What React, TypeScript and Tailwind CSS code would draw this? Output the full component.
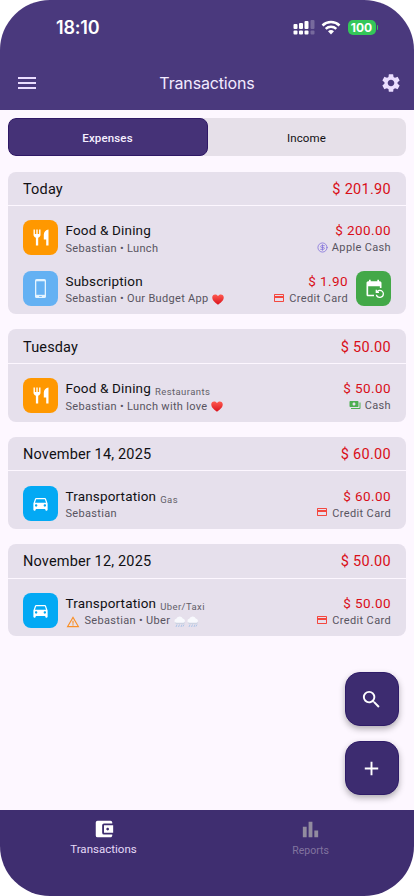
import React, { useState } from "react";
import {
	MdAccountBalanceWallet,
	MdAdd,
	MdBarChart,
	MdCreditCard,
	MdDirectionsCar,
	MdEventRepeat,
	MdMenu,
	MdPayments,
	MdSearch,
	MdSettings,
	MdWarningAmber,
} from "react-icons/md";
import { CircleDollarSign } from "lucide-react";

type Account = "Apple Cash" | "Credit Card" | "Cash";
type Category = "food" | "subscription" | "transport";

interface Transaction {
	category: Category;
	title: string;
	tag?: string;
	person: string;
	note?: string;
	emoji?: "heart" | "clouds";
	amount: string;
	account: Account;
	warning?: boolean;
	recurring?: boolean;
}

interface DayGroup {
	label: string;
	total: string;
	items: Transaction[];
}

const groups: DayGroup[] = [
	{
		label: "Today",
		total: "$ 201.90",
		items: [
			{ category: "food", title: "Food & Dining", person: "Sebastian", note: "Lunch", amount: "$ 200.00", account: "Apple Cash" },
			{ category: "subscription", title: "Subscription", person: "Sebastian", note: "Our Budget App", emoji: "heart", amount: "$ 1.90", account: "Credit Card", recurring: true },
		],
	},
	{
		label: "Tuesday",
		total: "$ 50.00",
		items: [
			{ category: "food", title: "Food & Dining", tag: "Restaurants", person: "Sebastian", note: "Lunch with love", emoji: "heart", amount: "$ 50.00", account: "Cash" },
		],
	},
	{
		label: "November 14, 2025",
		total: "$ 60.00",
		items: [{ category: "transport", title: "Transportation", tag: "Gas", person: "Sebastian", amount: "$ 60.00", account: "Credit Card" }],
	},
	{
		label: "November 12, 2025",
		total: "$ 50.00",
		items: [
			{ category: "transport", title: "Transportation", tag: "Uber/Taxi", person: "Sebastian", note: "Uber", emoji: "clouds", amount: "$ 50.00", account: "Credit Card", warning: true },
		],
	},
];

const tileColors: Record<Category, string> = {
	food: "bg-[#ff9800]",
	subscription: "bg-[#64b1f3]",
	transport: "bg-[#03a9f4]",
};

function Heart() {
	return (
		<svg role="img" aria-label="heart" viewBox="0 0 24 22" className="ml-[3px] h-[11px] w-[12px] shrink-0">
			<defs>
				<linearGradient id="heart" x1="0" y1="0" x2="0" y2="1">
					<stop offset="0" stopColor="#ff5a50" />
					<stop offset="1" stopColor="#d9121c" />
				</linearGradient>
			</defs>
			<path fill="url(#heart)" d="M12 21.500C7 18 .5 13 .5 7 .5 3.500 3 1 6.300 1 8.800 1 11 2.300 12 4.700 13 2.300 15.200 1 17.700 1 21 1 23.500 3.500 23.500 7c0 6-6.500 11-11.500 14.500z" />
		</svg>
	);
}

function RainCloud() {
	return (
		<svg role="img" aria-label="rain cloud" viewBox="0 0 24 24" className="h-[12px] w-[12px] shrink-0">
			<path fill="#f8f9fd" d="M5 14.500a4.500 4.500 0 0 1-.5-8.900A7 7 0 0 1 17.500 5 5 5 0 0 1 19 14.500z" />
			<path fill="#cdd3e2" d="M1.500 12.500c3 1.500 18 1.500 21 0-.8 2.500-2 3.500-4 3.500H5.500c-2 0-3.500-1-4-3.500z" />
			<path stroke="#9fbfe6" strokeWidth="1.600" d="M6 17l-2 5M11 17l-2 5M16 17l-2 5M20 17l-2 4" />
		</svg>
	);
}

function Cutlery() {
	return (
		<svg viewBox="0 0 16 17" className="h-[17px] w-[16px]" fill="currentColor">
			<path d="M0.500 0.500h1.400v4.500h1.400v-4.500h1.400v4.500h1.400v-4.500h1.400v5.300c0 1.500-.9 2.500-2.300 2.900V16.500H2.900V8.700C1.500 8.300.5 7.300.5 5.800z" />
			<path d="M15.500 0.500V16.500h-2.300V10.500h-2.400V5.500c0-2.600 2-4.700 4.700-5z" />
		</svg>
	);
}

function Phone() {
	return (
		<svg viewBox="0 0 11 19" className="h-[19px] w-[11px]">
			<rect width="11" height="19" rx="1.600" fill="#e4f4ff" />
			<rect x="1.300" y="2.300" width="8.400" height="13.500" fill="#64b1f3" />
			<rect x="4" y="16.900" width="3" height="0.800" rx="0.400" fill="#64b1f3" />
		</svg>
	);
}

function CategoryTile({ category }: { category: Category }) {
	return (
		<div className={`flex size-[35px] shrink-0 items-center justify-center rounded-[8px] text-white ${tileColors[category]}`}>
			{category === "food" && <Cutlery />}
			{category === "subscription" && <Phone />}
			{category === "transport" && <MdDirectionsCar size={19} />}
		</div>
	);
}

function AccountIcon({ account }: { account: Account }) {
	if (account === "Apple Cash") return <CircleDollarSign size={11} strokeWidth={1.800} className="mb-[3px] text-[#8676dc]" />;
	if (account === "Cash") return <MdPayments size={12} className="mb-[3px] text-[#4caf50]" />;
	return <MdCreditCard size={12} className="mb-[3px] text-[#f4483f]" />;
}

function TransactionRow({ item }: { item: Transaction }) {
	return (
		<div className="flex h-[35px]">
			<CategoryTile category={item.category} />
			<div className="ml-[7.500px] min-w-0 flex-1 whitespace-nowrap">
				<div className="flex h-[20px] items-baseline text-[13.500px] leading-[20px] tracking-[0.16px] text-[#111014]">
					{item.title}
					{item.tag && <span className="relative top-[2px] ml-1 text-[9.500px] tracking-[0.42px] text-[#625e68]">{item.tag}</span>}
				</div>
				<div className="flex h-[17px] items-center text-[11px] tracking-[0.32px] text-[#58545f]">
					{item.warning && <MdWarningAmber size={14} className="mr-[5px] text-[#f98f26]" />}
					<span>
						{item.person}
						{item.note && ` • ${item.note}`}
					</span>
					{item.emoji === "heart" && <Heart />}
					{item.emoji === "clouds" && (
						<span className="ml-1 flex gap-[1px]">
							<RainCloud />
							<RainCloud />
						</span>
					)}
				</div>
			</div>
			<div className="flex flex-col items-end whitespace-nowrap">
				<div className="h-[20px] text-[13.500px] leading-[20px] tracking-[0.42px] text-[#d90e18]">{item.amount}</div>
				<div className="flex h-[17px] items-center gap-1 text-[11px] tracking-[0.35px] text-[#58545f]">
					<AccountIcon account={item.account} />
					{item.account}
				</div>
			</div>
			{item.recurring && (
				<div className="ml-2 flex size-[35px] items-center justify-center rounded-[8px] bg-[#43a848] text-white">
					<MdEventRepeat size={20} />
				</div>
			)}
		</div>
	);
}

function DayCard({ group }: { group: DayGroup }) {
	return (
		<section className="overflow-hidden rounded-[8px] bg-[#e6e0ec]">
			<div className="flex h-[34.300px] items-center justify-between border-b-[1px] border-[#fdf7ff] px-[15px] pt-[3px] text-[14.500px] tracking-[0.16px]">
				<span className="text-[#111014]">{group.label}</span>
				<span className="tracking-[0.3px] text-[#d90e18]">{group.total}</span>
			</div>
			<div className="flex flex-col gap-[15.500px] px-[15px] pt-[14.500px] pb-[8.400px]">
				{group.items.map((item) => (
					<TransactionRow key={item.title} item={item} />
				))}
			</div>
		</section>
	);
}

function StatusBar() {
	return (
		<div className="flex h-[55px] items-center justify-between pr-[36px] pl-[56px] font-['Inter'] text-white">
			<span className="text-[18px] font-semibold tracking-[-0.2px]">18:10</span>
			<div className="flex items-center">
				<svg viewBox="0 0 22 15" className="h-[15px] w-[22px]" fill="#fff">
					<rect x="0.500" y="4" width="4" height="5" rx="1" />
					<rect x="6" y="3" width="4" height="6" rx="1" />
					<rect x="11.500" y="1" width="4" height="8" rx="1" />
					<rect x="17.500" y="0" width="4" height="9" rx="1" opacity=".25" />
					<rect x="0.500" y="10.500" width="4" height="4" rx="1" />
					<rect x="6" y="10.500" width="4" height="4" rx="1" />
					<rect x="11.500" y="10.500" width="4" height="4" rx="1" />
					<rect x="17.500" y="10.500" width="4" height="4" rx="1" opacity=".25" />
				</svg>
				<svg viewBox="0 0 20 15" className="ml-[6px] h-[15px] w-[20px]" fill="none" stroke="#fff" strokeWidth="2.500">
					<path d="M1.500 5.500a12.300 12.300 0 0 1 17 0" />
					<path d="M4.700 8.800a7.800 7.800 0 0 1 10.600 0" />
					<path d="M7 11.200a4.700 4.700 0 0 1 6 0L10 14.500z" fill="#fff" stroke="none" />
				</svg>
				<div className="ml-[7px] flex h-[15px] w-[28px] items-center justify-center rounded-[5px] bg-[#34c759] text-[12px] font-bold">100</div>
				<div className="ml-[1px] h-[5px] w-[1.500px] rounded-r-full bg-[#34c759]" />
			</div>
		</div>
	);
}

export default function App() {
	const [tab, setTab] = useState<"Expenses" | "Income">("Expenses");

	return (
		<div className="h-[896px] w-[414px] bg-white font-['Roboto','Noto_Sans',sans-serif]">
			<div className="relative flex h-full flex-col overflow-hidden rounded-[50px] bg-[#fdf7ff]">
				<header className="h-[110px] shrink-0 bg-[#4a397d]">
					<StatusBar />
					<div className="flex h-[56px] items-center justify-between px-[15px] text-[#eaddff]">
						<MdMenu size={24} />
						<h1 className="-ml-[5px] font-['Inter'] text-[16px] tracking-[-0.15px] text-[#f3ebff]">Transactions</h1>
						<MdSettings size={22} className="-mr-[3px]" />
					</div>
				</header>

				<main className="flex-1 px-2 pt-2">
					<div className="flex h-[38px] overflow-hidden rounded-[8px] bg-[#e6e0e9]">
						{(["Expenses", "Income"] as const).map((name) => (
							<button
								key={name}
								onClick={() => setTab(name)}
								className={`flex-1 pt-[3px] pr-[1px] text-[11.500px] tracking-[0.15px] ${
									tab === name ? "rounded-[8px] border border-[#2f1866] bg-[#453277] font-medium text-[#f6f0ff]" : "text-[#111014]"
								}`}
							>
								{name}
							</button>
						))}
					</div>

					<div className="mt-[15.600px] flex flex-col gap-[15.200px]">
						{groups.map((group) => (
							<DayCard key={group.label} group={group} />
						))}
					</div>
				</main>

				{/* floating actions */}
				<div className="absolute right-[15px] bottom-[101px] flex flex-col gap-[15px] text-white">
					<button className="flex size-[54px] items-center justify-center rounded-[15px] border border-[#2f1c68] bg-[#3d2c70] pr-[1px] shadow-[0_3px_6px_rgba(0,0,0,0.3)]">
						<MdSearch size={23} />
					</button>
					<button className="flex size-[54px] items-center justify-center rounded-[15px] border border-[#2f1c68] bg-[#3d2c70] pr-[1px] shadow-[0_3px_6px_rgba(0,0,0,0.3)]">
						<MdAdd size={23} />
					</button>
				</div>

				<nav className="flex h-[86px] shrink-0 bg-[#3f2e70]">
					<button className="flex flex-1 flex-col items-center pt-[8px] text-white">
						<MdAccountBalanceWallet size={22} />
						<span className="mt-[1px] text-[11.500px] leading-[17px] tracking-[0.02px] text-[#e5daf8]">Transactions</span>
					</button>
					<button className="flex flex-1 flex-col items-center pt-[8px] text-[#928c9f]">
						<MdBarChart size={23} />
						<span className="mt-[1px] text-[10.500px] leading-[17px] tracking-[0px] text-[#81749f]">Reports</span>
					</button>
				</nav>
			</div>
		</div>
	);
}
